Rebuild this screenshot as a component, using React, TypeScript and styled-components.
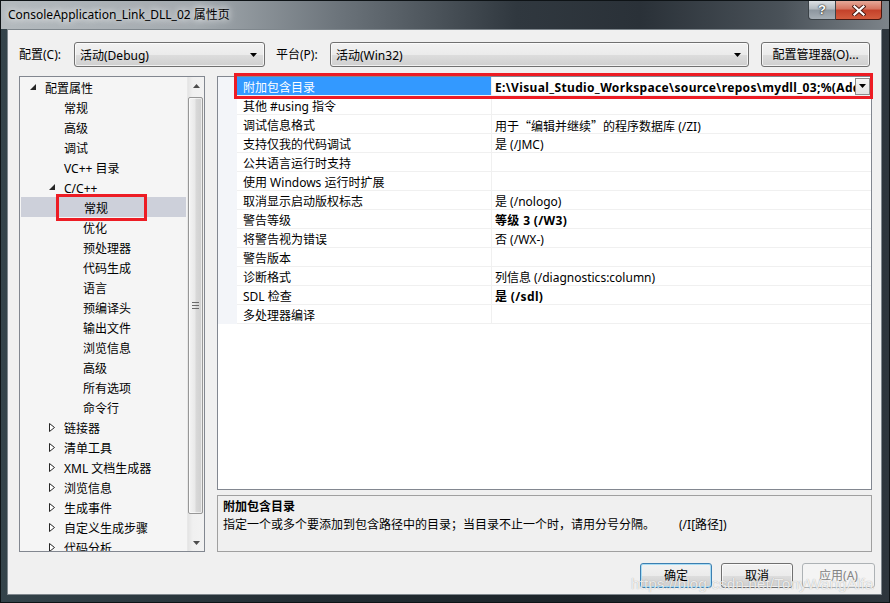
import React from 'react';
import styled, { createGlobalStyle } from 'styled-components';

const FONT = `"Noto Sans", "Noto Sans CJK SC", sans-serif`;

const GlobalStyle = createGlobalStyle`
  html, body { margin: 0; padding: 0; background: #1e262c; }
  body { font-family: ${FONT}; font-size: 12px; color: #000; }
  #root { width: 890px; height: 603px; }
  * { box-sizing: border-box; }
`;

const Window = styled.div`
  position: relative;
  width: 890px;
  height: 603px;
  display: flex;
  flex-direction: column;
  overflow: hidden;
  border: 1px solid #0e1316;
  background: linear-gradient(90deg, #34434a 0%, #222c32 35%, #1c2429 65%, #2e363d 100%);
`;

const TitleBar = styled.div`
  height: 28px;
  flex: none;
  display: flex;
  align-items: flex-start;
  background: linear-gradient(90deg, #b4babe 0%, #a3aaaf 22%, #6c747b 38%, #30383f 58%, #2a3138 72%, #4a5259 88%, #7d848a 100%);
`;

const Title = styled.div`
  padding-left: 7px;
  line-height: 27px;
  font-size: 12px;
  color: #000;
  white-space: nowrap;
  text-shadow: 0 0 6px rgba(255, 255, 255, 0.95), 0 0 10px rgba(255, 255, 255, 0.8);
`;

const Captions = styled.div`
  margin-left: auto;
  margin-right: 7px;
  display: flex;
`;

const HelpBtn = styled.div`
  width: 28px;
  height: 19px;
  border: 1px solid #3b4247;
  border-top: none;
  border-radius: 0 0 0 4px;
  background: linear-gradient(180deg, #dde1e4 0%, #b3bac0 45%, #8d969e 50%, #a6aeb5 100%);
  color: #fff;
  font-family: "Liberation Sans", sans-serif;
  font-weight: bold;
  font-size: 13px;
  line-height: 18px;
  text-align: center;
  text-shadow: 0 0 2px #222, 0 0 1px #000;
`;

const CloseBtn = styled.div`
  width: 46px;
  height: 19px;
  border: 1px solid #4a1810;
  border-left: none;
  border-top: none;
  border-radius: 0 0 4px 0;
  background: linear-gradient(180deg, #e6a898 0%, #d5735e 45%, #c4412a 50%, #d35c3e 100%);
  display: flex;
  align-items: center;
  justify-content: center;
`;

const Client = styled.div`
  flex: 1;
  min-height: 0;
  margin: 0 7px 7px 6px;
  border: 1px solid #7f878d;
  background: #f0f0f0;
  display: flex;
  flex-direction: column;
  padding: 12px 6px 6px 11px;
`;

const Toolbar = styled.div`
  height: 25px;
  flex: none;
  margin-right: 5px;
  display: flex;
  align-items: center;
`;

const Label = styled.div<{ $w: number }>`
  width: ${(p) => p.$w}px;
  flex: none;
  line-height: 25px;
  white-space: nowrap;
`;

const Combo = styled.div<{ $w: number; $mr: number }>`
  width: ${(p) => p.$w}px;
  margin-right: ${(p) => p.$mr}px;
  height: 25px;
  flex: none;
  border: 1px solid #707070;
  border-radius: 3px;
  background: linear-gradient(180deg, #f2f2f2 0%, #ebebeb 50%, #dddddd 51%, #cfcfcf 100%);
  display: flex;
  align-items: center;
  padding: 0 7px 0 5px;
  box-shadow: inset 0 0 0 1px rgba(255, 255, 255, 0.7);
`;

const ComboText = styled.span`
  flex: 1;
  white-space: nowrap;
`;

const Button = styled.div<{ $w: number; $kind?: 'default' | 'normal' | 'disabled' }>`
  width: ${(p) => p.$w}px;
  height: 25px;
  flex: none;
  border-radius: 3px;
  border: 1px solid
    ${(p) => (p.$kind === 'default' ? '#3c7fb1' : p.$kind === 'disabled' ? '#adb2b5' : '#707070')};
  background: ${(p) =>
    p.$kind === 'disabled'
      ? '#f4f4f4'
      : 'linear-gradient(180deg, #f2f2f2 0%, #ebebeb 50%, #dddddd 51%, #cfcfcf 100%)'};
  box-shadow: ${(p) =>
    p.$kind === 'default'
      ? 'inset 0 0 0 1px #a8dcf4'
      : p.$kind === 'disabled'
      ? 'none'
      : 'inset 0 0 0 1px rgba(255,255,255,0.7)'};
  color: ${(p) => (p.$kind === 'disabled' ? '#838383' : '#000')};
  line-height: 23px;
  text-align: center;
  white-space: nowrap;
`;

const Main = styled.div`
  flex: 1 1 0;
  min-height: 0;
  margin-top: 9px;
  margin-right: 3px;
  display: flex;
  gap: 12px;
`;

const TreePanel = styled.div`
  width: 186px;
  flex: none;
  border: 1px solid #828790;
  background: #f5f5f5;
  display: flex;
  overflow: hidden;
`;

const TreeList = styled.div`
  flex: 1;
  overflow: hidden;
`;

const TreeRow = styled.div<{ $level: number; $selected?: boolean }>`
  position: relative;
  height: 20px;
  padding-top: 4px;
  line-height: 16px;
  display: flex;
  align-items: center;
  padding-left: ${(p) => 6 + p.$level * 19}px;
  background: ${(p) => (p.$selected ? '#cdd0da' : 'transparent')};
  margin-right: ${(p) => (p.$selected ? 1 : 0)}px;
  margin-left: ${(p) => (p.$selected ? 1 : 0)}px;
  white-space: nowrap;
`;

const Expander = styled.div`
  width: 19px;
  height: 16px;
  flex: none;
  display: flex;
  align-items: center;
  padding-left: 4px;
  margin-top: -4px;
`;

const Annotation = styled.div<{ $l: number; $t: number; $r?: number; $b: number; $w?: number }>`
  position: absolute;
  left: ${(p) => p.$l}px;
  top: ${(p) => p.$t}px;
  bottom: ${(p) => p.$b}px;
  ${(p) => (p.$w !== undefined ? `width: ${p.$w}px;` : `right: ${p.$r}px;`)}
  border: 3px solid #ed1c24;
  pointer-events: none;
  z-index: 2;
`;

const ScrollBar = styled.div`
  width: 17px;
  flex: none;
  display: flex;
  flex-direction: column;
  background: linear-gradient(90deg, #e4e4e4 0%, #f0f0f0 30%, #f2f2f2 100%);
  border-left: 1px solid #e8e8e8;
`;

const ScrollArrow = styled.div`
  height: 17px;
  flex: none;
  display: flex;
  align-items: center;
  justify-content: center;
`;

const ScrollTrack = styled.div`
  flex: 1;
  padding: 3px 1px 0 0;
`;

const Thumb = styled.div`
  height: 417px;
  border: 1px solid #979797;
  border-radius: 2px;
  background: linear-gradient(90deg, #f4f4f4 0%, #e9e9e9 45%, #d8d8d8 55%, #cfcfcf 100%);
  box-shadow: inset 0 0 0 1px rgba(255, 255, 255, 0.6);
  display: flex;
  align-items: center;
  justify-content: center;
`;

const RightCol = styled.div`
  flex: 1;
  display: flex;
  flex-direction: column;
  gap: 5px;
  min-width: 0;
`;

const GridPanel = styled.div`
  position: relative;
  flex: 1;
  min-height: 0;
  border: 1px solid #828790;
  background: #fff;
`;

const GridRow = styled.div`
  position: relative;
  height: 19px;
  display: grid;
  grid-template-columns: 19px 254px 1fr;
`;

const Gutter = styled.div`
  background: #f3f5f9;
`;

const NameCell = styled.div<{ $selected?: boolean }>`
  padding: 4px 0 0 6px;
  line-height: 14px;
  border-bottom: 1px solid #f0f0f0;
  background: ${(p) => (p.$selected ? '#3399ff' : '#fff')};
  color: ${(p) => (p.$selected ? '#fff' : '#000')};
  white-space: nowrap;
  overflow: hidden;
`;

const ValueCell = styled.div<{ $bold?: boolean }>`
  display: flex;
  align-items: center;
  padding-left: 3px;
  border-left: 1px solid #f0f0f0;
  border-bottom: 1px solid #f0f0f0;
  font-weight: ${(p) => (p.$bold ? 'bold' : 'normal')};
  letter-spacing: ${(p) => (p.$bold ? '0.35px' : 'normal')};
  white-space: nowrap;
  overflow: hidden;
  min-width: 0;
`;

const ValueText = styled.span`
  flex: 1;
  align-self: stretch;
  padding-top: 4px;
  line-height: 14px;
  overflow: hidden;
  white-space: nowrap;
`;

const CjkQuote = styled.span`
  font-family: "Noto Sans CJK SC", sans-serif;
`;

const DropBtn = styled.div`
  width: 15px;
  height: 17px;
  margin-right: 1px;
  flex: none;
  border: 1px solid #8c8c8c;
  background: linear-gradient(180deg, #f7f7f7 0%, #e3e3e3 100%);
  display: flex;
  align-items: center;
  justify-content: center;
`;

const DescPanel = styled.div`
  height: 57px;
  flex: none;
  border: 1px solid #a0a0a0;
  background: #f0f0f0;
  padding: 2px 5px;
  line-height: 18px;
  white-space: nowrap;
`;

const DescTitle = styled.div`
  font-weight: bold;
`;

const DescHint = styled.span`
  margin-left: 24px;
`;

const ButtonRow = styled.div`
  flex: none;
  margin-top: 11px;
  display: flex;
  justify-content: flex-end;
  gap: 9px;
`;

const Watermark = styled.div`
  position: absolute;
  left: 630px;
  top: 574px;
  font-family: "Liberation Sans", sans-serif;
  font-size: 15.5px;
  color: rgba(255, 255, 255, 0.82);
  text-shadow: 0 0 1px rgba(0, 0, 0, 0.35);
  white-space: nowrap;
  pointer-events: none;
  z-index: 5;
`;

type TreeItem = { label: string; level: number; exp?: 'open' | 'closed'; selected?: boolean };

const treeItems: TreeItem[] = [
  { label: '配置属性', level: 0, exp: 'open' },
  { label: '常规', level: 1 },
  { label: '高级', level: 1 },
  { label: '调试', level: 1 },
  { label: 'VC++ 目录', level: 1 },
  { label: 'C/C++', level: 1, exp: 'open' },
  { label: '常规', level: 2, selected: true },
  { label: '优化', level: 2 },
  { label: '预处理器', level: 2 },
  { label: '代码生成', level: 2 },
  { label: '语言', level: 2 },
  { label: '预编译头', level: 2 },
  { label: '输出文件', level: 2 },
  { label: '浏览信息', level: 2 },
  { label: '高级', level: 2 },
  { label: '所有选项', level: 2 },
  { label: '命令行', level: 2 },
  { label: '链接器', level: 1, exp: 'closed' },
  { label: '清单工具', level: 1, exp: 'closed' },
  { label: 'XML 文档生成器', level: 1, exp: 'closed' },
  { label: '浏览信息', level: 1, exp: 'closed' },
  { label: '生成事件', level: 1, exp: 'closed' },
  { label: '自定义生成步骤', level: 1, exp: 'closed' },
  { label: '代码分析', level: 1, exp: 'closed' },
];

type Prop = { name: string; value?: React.ReactNode; bold?: boolean; selected?: boolean };

const props: Prop[] = [
  {
    name: '附加包含目录',
    value: 'E:\\Visual_Studio_Workspace\\source\\repos\\mydll_03;%(AdditionalIncludeDirectories)',
    bold: true,
    selected: true,
  },
  { name: '其他 #using 指令' },
  {
    name: '调试信息格式',
    value: (
      <>
        用于<CjkQuote>“</CjkQuote>编辑并继续<CjkQuote>”</CjkQuote>的程序数据库 (/ZI)
      </>
    ),
  },
  { name: '支持仅我的代码调试', value: '是 (/JMC)' },
  { name: '公共语言运行时支持' },
  { name: '使用 Windows 运行时扩展' },
  { name: '取消显示启动版权标志', value: '是 (/nologo)' },
  { name: '警告等级', value: '等级 3 (/W3)', bold: true },
  { name: '将警告视为错误', value: '否 (/WX-)' },
  { name: '警告版本' },
  { name: '诊断格式', value: '列信息 (/diagnostics:column)' },
  { name: 'SDL 检查', value: '是 (/sdl)', bold: true },
  { name: '多处理器编译' },
];

const DownTri = ({ w = 7, h = 4, c = '#000' }: { w?: number; h?: number; c?: string }) => (
  <svg width={w} height={h} viewBox={`0 0 ${w} ${h}`}>
    <polygon points={`0,0 ${w},0 ${w / 2},${h}`} fill={c} />
  </svg>
);

const UpTri = ({ w = 7, h = 4, c = '#4d4d4d' }: { w?: number; h?: number; c?: string }) => (
  <svg width={w} height={h} viewBox={`0 0 ${w} ${h}`}>
    <polygon points={`0,${h} ${w},${h} ${w / 2},0`} fill={c} />
  </svg>
);

const OpenTri = () => (
  <svg width="6" height="6" viewBox="0 0 6 6">
    <polygon points="6,0 6,6 0,6" fill="#262626" />
  </svg>
);

const ClosedTri = () => (
  <svg width="6" height="9" viewBox="0 0 6 9">
    <polygon points="0.5,0.5 5.5,4.5 0.5,8.5" fill="#fff" stroke="#262626" strokeWidth="1" />
  </svg>
);

const Grip = () => (
  <svg width="7" height="7" viewBox="0 0 7 7">
    <rect x="0" y="0" width="7" height="1" fill="#6a6a6a" />
    <rect x="0" y="3" width="7" height="1" fill="#6a6a6a" />
    <rect x="0" y="6" width="7" height="1" fill="#6a6a6a" />
  </svg>
);

export default function App() {
  return (
    <>
      <GlobalStyle />
      <Window>
        <TitleBar>
          <Title>ConsoleApplication_Link_DLL_02 属性页</Title>
          <Captions>
            <HelpBtn>?</HelpBtn>
            <CloseBtn>
              <svg width="14" height="11" viewBox="0 0 14 11">
                <path d="M2.5 1.5 L11.5 9.5 M11.5 1.5 L2.5 9.5" stroke="#4a1a12" strokeWidth="4" strokeLinecap="square" />
                <path d="M2.5 1.5 L11.5 9.5 M11.5 1.5 L2.5 9.5" stroke="#fff" strokeWidth="2.2" strokeLinecap="square" />
              </svg>
            </CloseBtn>
          </Captions>
        </TitleBar>
        <Client>
          <Toolbar>
            <Label $w={55}>配置(C):</Label>
            <Combo $w={191} $mr={11}>
              <ComboText>活动(Debug)</ComboText>
              <DownTri />
            </Combo>
            <Label $w={54}>平台(P):</Label>
            <Combo $w={419} $mr={12}>
              <ComboText>活动(Win32)</ComboText>
              <DownTri />
            </Combo>
            <Button $w={109}>配置管理器(O)...</Button>
          </Toolbar>
          <Main>
            <TreePanel>
              <TreeList>
                {treeItems.map((it, i) => (
                  <TreeRow key={i} $level={it.level} $selected={it.selected}>
                    <Expander>
                      {it.exp === 'open' && <OpenTri />}
                      {it.exp === 'closed' && <ClosedTri />}
                    </Expander>
                    {it.label}
                    {it.selected && <Annotation $l={35} $t={-3} $b={-4} $w={91} />}
                  </TreeRow>
                ))}
              </TreeList>
              <ScrollBar>
                <ScrollArrow>
                  <UpTri />
                </ScrollArrow>
                <ScrollTrack>
                  <Thumb>
                    <Grip />
                  </Thumb>
                </ScrollTrack>
                <ScrollArrow>
                  <DownTri c="#4d4d4d" />
                </ScrollArrow>
              </ScrollBar>
            </TreePanel>
            <RightCol>
              <GridPanel>
                {props.map((p, i) => (
                  <GridRow key={i}>
                    <Gutter />
                    <NameCell $selected={p.selected}>{p.name}</NameCell>
                    <ValueCell $bold={p.bold}>
                      <ValueText>{p.value ?? ''}</ValueText>
                      {p.selected && (
                        <DropBtn>
                          <DownTri />
                        </DropBtn>
                      )}
                    </ValueCell>
                    {p.selected && <Annotation $l={16} $t={-4} $b={-3} $r={-2} />}
                  </GridRow>
                ))}
              </GridPanel>
              <DescPanel>
                <DescTitle>附加包含目录</DescTitle>
                <div>
                  指定一个或多个要添加到包含路径中的目录；当目录不止一个时，请用分号分隔。
                  <DescHint>(/I[路径])</DescHint>
                </div>
              </DescPanel>
            </RightCol>
          </Main>
          <ButtonRow>
            <Button $w={72} $kind="default">确定</Button>
            <Button $w={72}>取消</Button>
            <Button $w={73} $kind="disabled">应用(A)</Button>
          </ButtonRow>
        </Client>
        <Watermark>https://blog.csdn.net/TonyWangAlfa</Watermark>
      </Window>
    </>
  );
}
